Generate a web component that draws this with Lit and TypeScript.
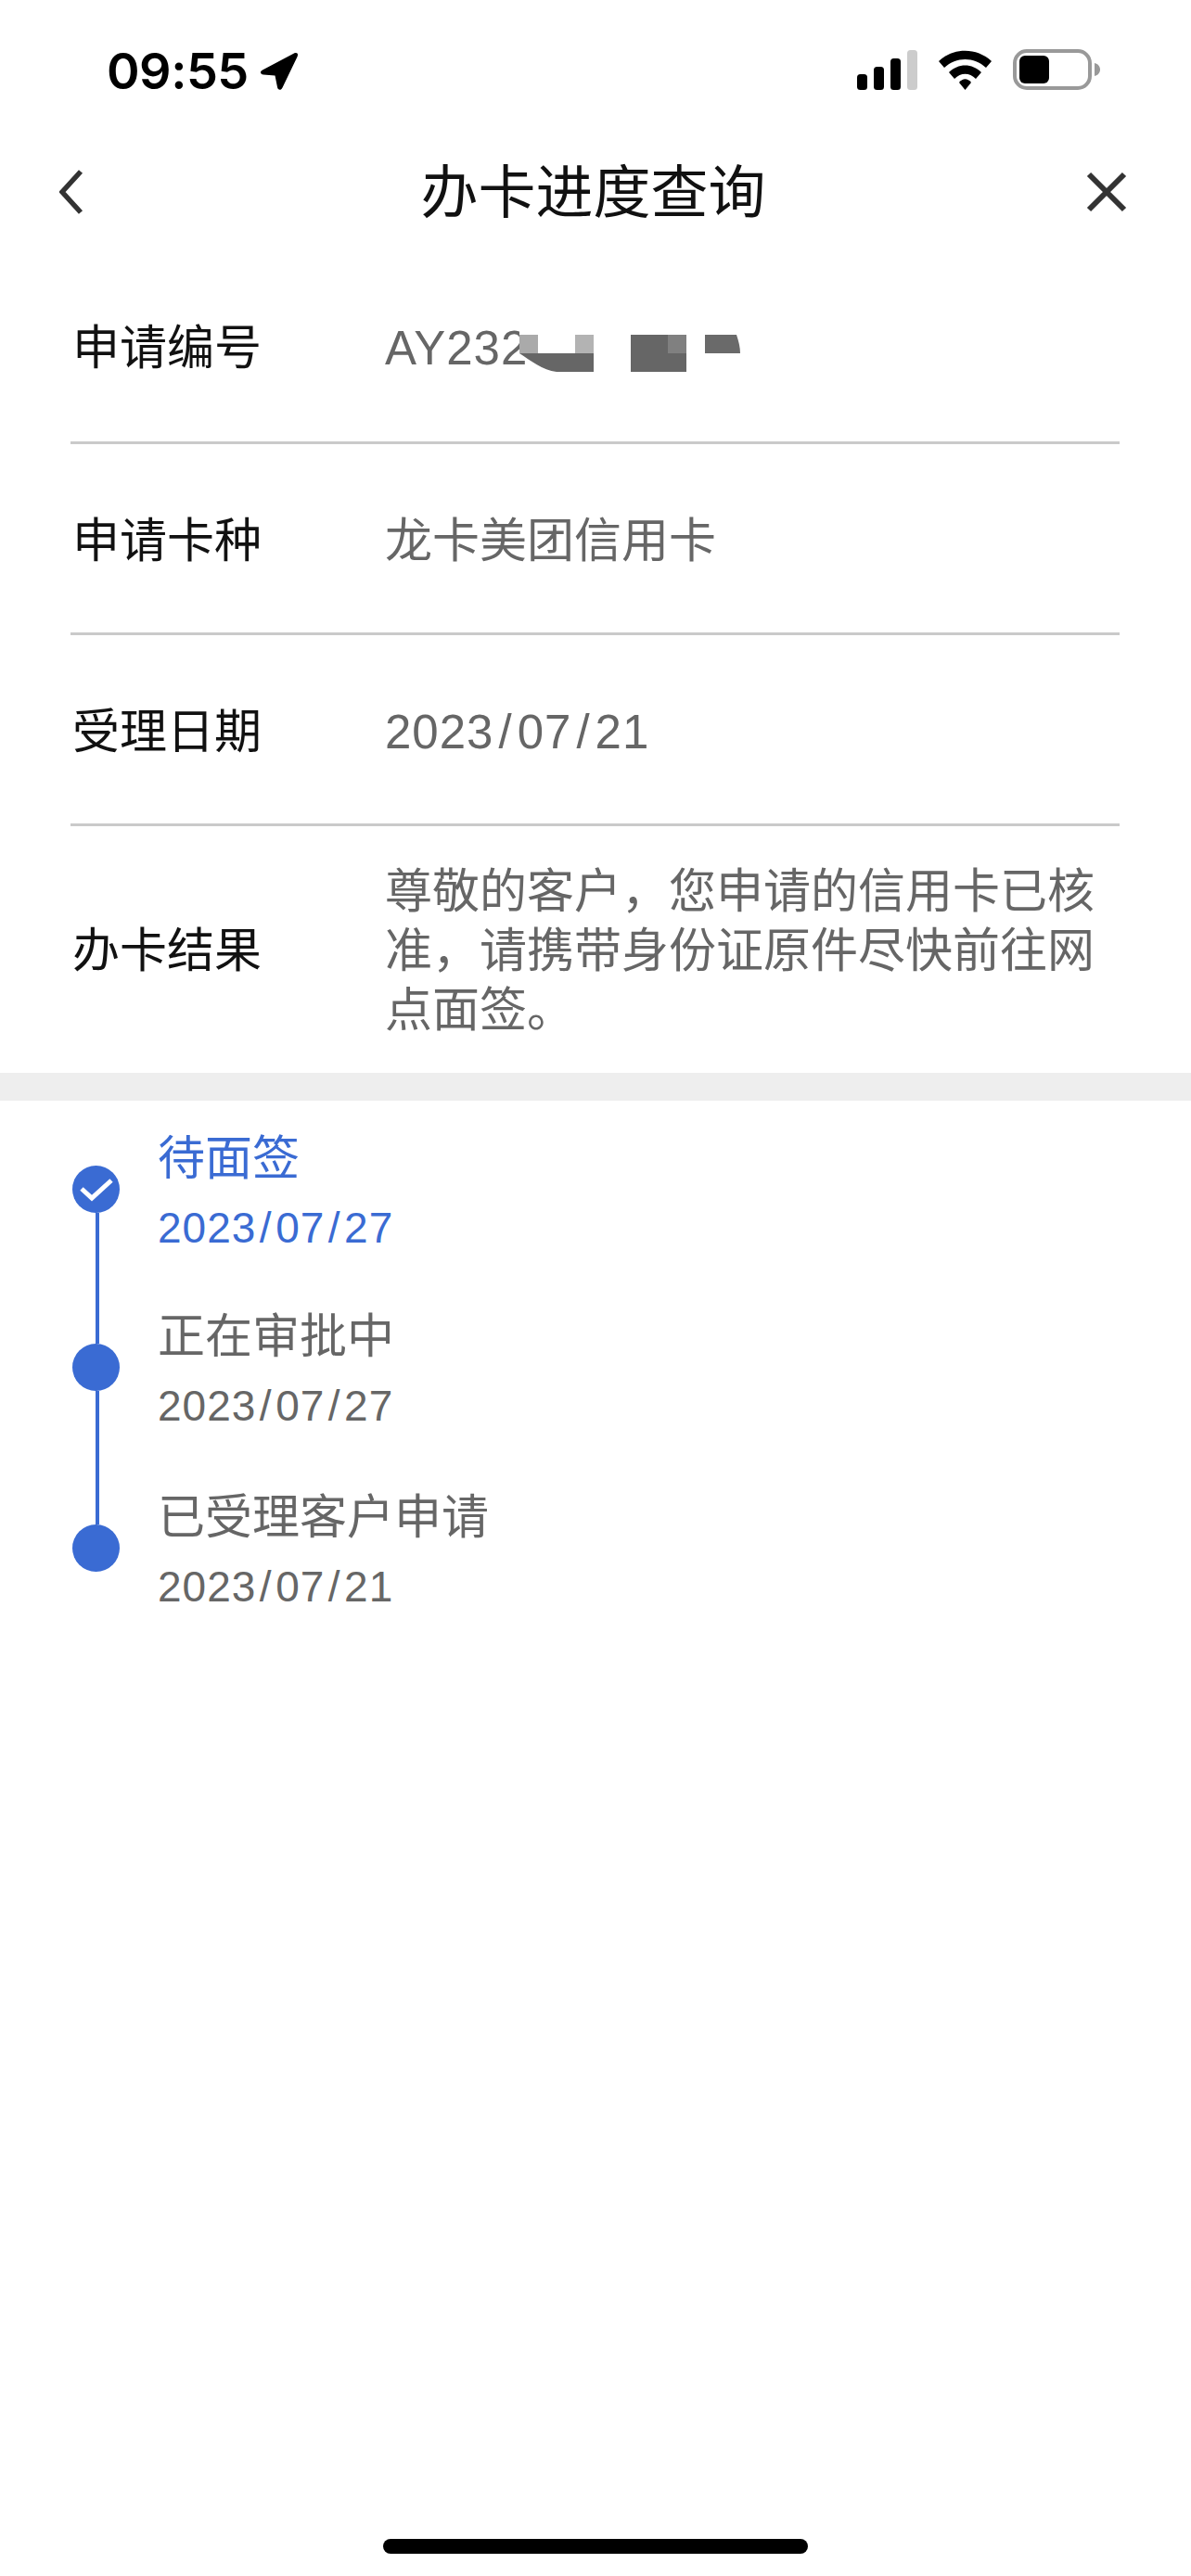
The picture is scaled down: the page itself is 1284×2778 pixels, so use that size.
import { LitElement, html, css, svg } from "lit";
import { customElement } from "lit/decorators.js";

const rows = [
  { label: "申请卡种", value: "龙卡美团信用卡", latin: false },
  { label: "受理日期", value: "2023/07/21", latin: true },
];

const steps = [
  { title: "待面签", date: "2023/07/27", cls: "first active" },
  { title: "正在审批中", date: "2023/07/27", cls: "middle" },
  { title: "已受理客户申请", date: "2023/07/21", cls: "last" },
];

const dated = (s: string) => {
  const [y, m, d] = s.split("/");
  return html`${y}<span class="sl">/</span>${m}<span class="sl">/</span>${d}`;
};

@customElement("app-root")
export class AppRoot extends LitElement {
  static styles = css`
    :host {
      display: block;
      width: 1284px;
      font-family: "Liberation Sans", "Noto Sans CJK SC", sans-serif;
      color: #111;
      background: #fff;
    }
    .page {
      min-height: 2778px;
      display: flex;
      flex-direction: column;
      background: #fff;
    }
    .status {
      height: 150px;
      box-sizing: border-box;
      padding: 50px 93px 0 115px;
      display: flex;
      justify-content: space-between;
      align-items: flex-start;
    }
    .clock {
      display: flex;
      align-items: center;
      gap: 12px;
      font-family: Inter, sans-serif;
      font-weight: 600;
      font-size: 54px;
      line-height: 54px;
      color: #000;
      letter-spacing: -0.5px;
    }
    .clock svg, .sys svg { display: block; }
    .sys { display: flex; padding-top: 3px; }
    .nav {
      height: 116px;
      box-sizing: border-box;
      padding: 2px 69px 0 64px;
      display: grid;
      grid-template-columns: 1fr auto 1fr;
      align-items: center;
    }
    .nav svg { margin-bottom: 4px; }
    .nav .close { justify-self: end; }
    .nav h1 {
      margin: 0;
      font-size: 62px;
      line-height: 80px;
      font-weight: 400;
      color: #111;
    }
    .info { padding: 0 77px 0 76px; }
    .row {
      display: flex;
      align-items: center;
      height: 206px;
      padding-top: 7px;
      border-bottom: 3px solid #cacaca;
      box-sizing: border-box;
    }
    .row.first { height: 213px; padding-top: 10px; }
    .row.tall { height: 266px; padding-top: 4px; border-bottom: none; }
    .label {
      width: 339px;
      box-sizing: border-box;
      padding-left: 2px;
      flex: none;
      font-size: 51px;
      line-height: 64px;
      color: #111;
    }
    .value {
      position: relative;
      flex: 1;
      font-size: 51px;
      line-height: 64px;
      color: #666;
      padding-right: 20px;
    }
    .num { letter-spacing: 1px; }
    .sl { margin: 0 5px; }
    .mosaic {
      position: absolute;
      left: 0;
      top: 5px;
    }
    .band { height: 30px; background: #eeeeee; }
    .steps { padding-left: 78px; }
    .step {
      display: flex;
      height: 193px;
      gap: 41px;
      color: #666;
    }
    .step.first { height: 191px; }
    .step.active { color: #3a6bd3; }
    .step.last { height: 197px; }
    .rail {
      width: 51px;
      flex: none;
      display: flex;
      flex-direction: column;
      align-items: center;
    }
    .seg { flex: 1; width: 4px; margin-left: 2px; background: #3a6bd3; }
    .first .seg.up, .last .seg.down { background: transparent; }
    .dot {
      width: 51px;
      height: 51px;
      border-radius: 50%;
      background: #3a6bd3;
      flex: none;
      display: flex;
      align-items: center;
      justify-content: center;
    }
    .body {
      display: flex;
      flex-direction: column;
      justify-content: center;
      padding-bottom: 2px;
    }
    .title { font-size: 51px; line-height: 76px; }
    .date { font-size: 46px; line-height: 56px; margin-top: 8px; letter-spacing: 1px; }
    .date .sl { margin: 0 3.5px; }
    .spacer { flex: 1; }
    .home { display: flex; justify-content: center; padding-bottom: 24px; }
    .home div { width: 458px; height: 16px; border-radius: 8px; background: #000; }
  `;

  private mosaic() {
    return html`<svg class="mosaic" width="420" height="64" viewBox="0 0 420 64">
      ${svg`
        <rect x="145" y="0" width="240" height="32" fill="#fff"></rect>
        <rect x="145" y="12" width="20" height="20" fill="#aaaaaa"></rect>
        <rect x="205" y="12" width="20" height="20" fill="#b3b3b3"></rect>
        <path d="M145 32H225V52H185C170 50 157 40 145 32Z" fill="#666"></path>
        <rect x="265" y="12" width="60" height="40" fill="#666"></rect>
        <rect x="305" y="12" width="20" height="20" fill="#808080"></rect>
        <path d="M345 12H379C381 18 383 25 383 32H345Z" fill="#6a6a6a"></path>
      `}
    </svg>`;
  }

  render() {
    return html`
      <div class="page">
        <div class="status">
          <div class="clock">
            <span>09:55</span>
            <svg width="42" height="42" viewBox="0 0 42 42">
              <path d="M3 19.5 37 1.5C40 .2 42 2 40.6 5L24.5 38.5C23 41.8 19.6 41.4 19 38L16.5 25.5 4 24.5C.4 24 0 21 3 19.5Z" fill="#000"></path>
            </svg>
          </div>
          <div class="sys">
            <svg width="271" height="46" viewBox="0 0 271 46">
              <rect x="4" y="27" width="11" height="17" rx="3.5" fill="#000"></rect>
              <rect x="22" y="19" width="11" height="25" rx="3.5" fill="#000"></rect>
              <rect x="40" y="10" width="11" height="34" rx="3.5" fill="#000"></rect>
              <rect x="58" y="1" width="11" height="43" rx="3.5" fill="#cccccc"></rect>
              <path d="M92 13C108-2 133-2 149 13L143 20C130 8 111 8 98 20Z" fill="#000"></path>
              <path d="M103 25C113 15 128 15 138 25L132 32C125 25 116 25 109 32Z" fill="#000"></path>
              <path d="M114 36C118 31 123 31 127 36L120.5 44Z" fill="#000"></path>
              <rect x="174" y="2" width="81" height="40" rx="13" fill="none" stroke="#999" stroke-width="4"></rect>
              <rect x="179" y="7" width="32" height="30" rx="6" fill="#000"></rect>
              <path d="M260 15C264 16 266 19 266 22C266 25 264 28 260 29Z" fill="#999"></path>
            </svg>
          </div>
        </div>

        <div class="nav">
          <svg width="26" height="48" viewBox="0 0 26 48">
            <path d="M23 2 3 24 23 46" fill="none" stroke="#333" stroke-width="5.5"></path>
          </svg>
          <h1>办卡进度查询</h1>
          <svg class="close" width="44" height="44" viewBox="0 0 44 44">
            <path d="M3 3 41 41M41 3 3 41" fill="none" stroke="#333" stroke-width="6"></path>
          </svg>
        </div>

        <div class="info">
          <div class="row first">
            <div class="label">申请编号</div>
            <div class="value"><span class="num">AY232</span>${this.mosaic()}</div>
          </div>
          ${rows.map(
            (r) => html`<div class="row">
              <div class="label">${r.label}</div>
              <div class="value ${r.latin ? "num" : ""}">${r.latin ? dated(r.value) : r.value}</div>
            </div>`
          )}
          <div class="row tall">
            <div class="label">办卡结果</div>
            <div class="value">尊敬的客户，您申请的信用卡已核准，请携带身份证原件尽快前往网点面签。</div>
          </div>
        </div>

        <div class="band"></div>

        <div class="steps">
          ${steps.map(
            (s, i) => html`<div class="step ${s.cls}">
              <div class="rail">
                <div class="seg up"></div>
                <div class="dot">
                  ${i === 0
                    ? html`<svg width="38" height="26" viewBox="0 0 38 26">
                        <path d="M3 12 14 22 35 3" fill="none" stroke="#fff" stroke-width="5"></path>
                      </svg>`
                    : ""}
                </div>
                <div class="seg down"></div>
              </div>
              <div class="body">
                <div class="title">${s.title}</div>
                <div class="date">${dated(s.date)}</div>
              </div>
            </div>`
          )}
        </div>

        <div class="spacer"></div>
        <div class="home"><div></div></div>
      </div>
    `;
  }
}
